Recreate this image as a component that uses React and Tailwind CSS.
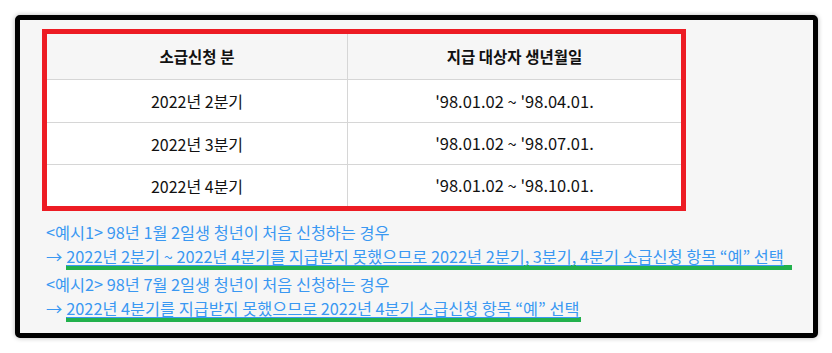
import React from "react";

const rows = [
  { q: "2022년 2분기", range: "'98.01.02 ~ '98.04.01.", h: "h-[43px] border-b" },
  { q: "2022년 3분기", range: "'98.01.02 ~ '98.07.01.", h: "h-[42px] border-b" },
  { q: "2022년 4분기", range: "'98.01.02 ~ '98.10.01.", h: "h-[41px]" },
];

const font = { fontFamily: "'Noto Sans CJK KR', 'Noto Sans', sans-serif" };

const App = () => {
  return (
    <div className="w-[832px] h-[353px] bg-white pt-[15px] pl-[15px]" style={font}>
      {/* Framed box */}
      <div className="w-[803px] h-[323px] border-[5px] border-black rounded-[5px] bg-[#f6f6f6] shadow-[0_0_5px_rgba(0,0,0,0.3)] pt-[9px] pl-[22px]">
        {/* Table in red box */}
        <div className="w-[644px] border-[5px] border-[#ed1c24] bg-white">
          <div className="grid grid-cols-[301px_1fr] text-[16px]">
            <div className="h-[46px] flex items-center justify-center bg-[#f6f6f6] border-b border-r border-[#d6d6d6] text-[15.5px] font-bold text-[#111]">
              소급신청 분
            </div>
            <div className="h-[46px] flex items-center justify-center bg-[#f6f6f6] border-b border-[#d6d6d6] text-[15.5px] font-bold text-[#111]">
              지급 대상자 생년월일
            </div>
            {rows.map((r) => (
              <React.Fragment key={r.q}>
                <div className={`${r.h} flex items-center justify-center border-r border-[#d6d6d6] text-[#111]`}>
                  {r.q}
                </div>
                <div className={`${r.h} flex items-center justify-center border-[#d6d6d6] text-[16.5px] text-[#111]`}>
                  {r.range}
                </div>
              </React.Fragment>
            ))}
          </div>
        </div>

        {/* Examples */}
        <div className="ml-[4px] mt-[9px] text-[16.3px] text-[#3a98f2]">
          <div className="h-[24px] leading-[24px]">&lt;예시1&gt; 98년 1월 2일생 청년이 처음 신청하는 경우</div>
          <div className="flex items-start h-[28px]">
            <span className="leading-[18px] mt-[3px] mr-[4px]">→</span>
            <span className="inline-block leading-[18px] mt-[3px] border-b-[5px] border-[#22b14c] pr-[8px]">
              <span className="underline underline-offset-2">
                2022년 2분기 ~ 2022년 4분기를 지급받지 못했으므로 2022년 2분기, 3분기, 4분기 소급신청 항목 “예” 선택
              </span>
            </span>
          </div>
          <div className="h-[24px] leading-[24px]">&lt;예시2&gt; 98년 7월 2일생 청년이 처음 신청하는 경우</div>
          <div className="flex items-start">
            <span className="leading-[18px] mt-[3px] mr-[4px]">→</span>
            <span className="inline-block leading-[18px] mt-[3px] border-b-[5px] border-[#22b14c] pr-[2px]">
              <span className="underline underline-offset-2">
                2022년 4분기를 지급받지 못했으므로 2022년 4분기 소급신청 항목 “예” 선택
              </span>
            </span>
          </div>
        </div>
      </div>
    </div>
  );
};

export default App;
